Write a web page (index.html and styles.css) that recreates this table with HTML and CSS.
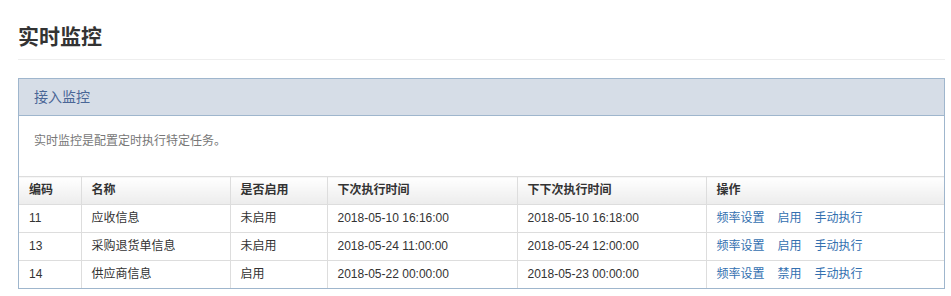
FILE: index.html
```html
<!DOCTYPE html>
<html lang="zh-CN">
<head>
  <meta charset="UTF-8" />
  <meta name="viewport" content="width=device-width, initial-scale=1.0" />
  <title>实时监控</title>
  <link rel="stylesheet" href="styles.css">
</head>
<body>
  <div class="page">
    <h1 class="page-title">实时监控</h1>

    <div class="panel">
      <div class="panel-heading">接入监控</div>
      <div class="panel-body">
        <p class="desc">实时监控是配置定时执行特定任务。</p>
      </div>
      <table class="grid">
        <colgroup>
          <col class="c-code">
          <col class="c-name">
          <col class="c-state">
          <col class="c-next">
          <col class="c-next2">
          <col>
        </colgroup>
        <thead>
          <tr>
            <th>编码</th>
            <th>名称</th>
            <th>是否启用</th>
            <th>下次执行时间</th>
            <th>下下次执行时间</th>
            <th>操作</th>
          </tr>
        </thead>
        <tbody>
          <tr>
            <td>11</td>
            <td>应收信息</td>
            <td>未启用</td>
            <td>2018-05-10 16:16:00</td>
            <td>2018-05-10 16:18:00</td>
            <td class="ops"><a href="#">频率设置</a><a href="#">启用</a><a href="#">手动执行</a></td>
          </tr>
          <tr>
            <td>13</td>
            <td>采购退货单信息</td>
            <td>未启用</td>
            <td>2018-05-24 11:00:00</td>
            <td>2018-05-24 12:00:00</td>
            <td class="ops"><a href="#">频率设置</a><a href="#">启用</a><a href="#">手动执行</a></td>
          </tr>
          <tr>
            <td>14</td>
            <td>供应商信息</td>
            <td>启用</td>
            <td>2018-05-22 00:00:00</td>
            <td>2018-05-23 00:00:00</td>
            <td class="ops"><a href="#">频率设置</a><a href="#">禁用</a><a href="#">手动执行</a></td>
          </tr>
        </tbody>
      </table>
    </div>
  </div>
</body>
</html>
```

FILE: styles.css
```css
body {
  margin: 0;
  font-family: "Liberation Sans", "Noto Sans CJK SC", sans-serif;
  font-size: 12px;
  color: #333;
  background: #fff;
}
.page {
  padding: 0 6px 0 18px;
}
.page-title {
  margin: 22px 0 0;
  padding-bottom: 7px;
  font-size: 21px;
  line-height: 30px;
  font-weight: bold;
  color: #333;
  border-bottom: 1px solid #eee;
}
.panel {
  margin-top: 18px;
  border: 1px solid #9fb6cd;
  background: #fff;
}
.panel-heading {
  height: 36px;
  line-height: 36px;
  padding: 0 15px;
  font-size: 14px;
  color: #4a6696;
  background: #d6dde7;
  border-bottom: 1px solid #9fb6cd;
}
.panel-body {
  padding: 15px 15px 0;
}
.desc {
  margin: 0 0 25px;
  line-height: 20px;
  color: #777;
}
.grid {
  width: 100%;
  border-collapse: collapse;
  table-layout: fixed;
}
.c-code { width: 62px; }
.c-name { width: 149px; }
.c-state { width: 97px; }
.c-next { width: 190px; }
.c-next2 { width: 189px; }
.grid th,
.grid td {
  height: 17px;
  padding: 5px 10px;
  line-height: 17px;
  text-align: left;
  border-top: 1px solid #ddd;
  border-left: 1px solid #ddd;
  white-space: nowrap;
}
.grid th:first-child,
.grid td:first-child {
  border-left: none;
}
.grid th {
  font-weight: bold;
  background: linear-gradient(#fff, #ececec);
}
.ops a {
  color: #3370b0;
  text-decoration: none;
  margin-right: 13px;
}
```
